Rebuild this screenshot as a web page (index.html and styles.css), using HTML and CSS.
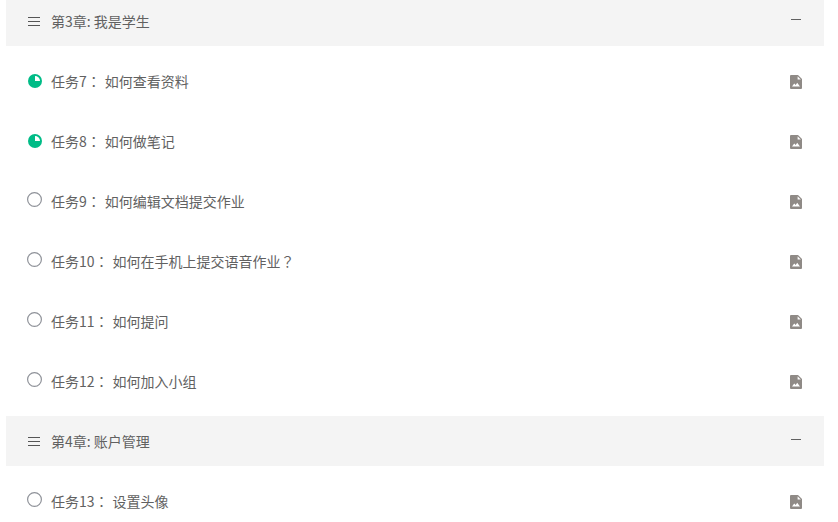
FILE: index.html
```html
<!DOCTYPE html>
<html lang="zh-CN">
<head>
<meta charset="utf-8">
<title>课程目录</title>
<link rel="stylesheet" href="styles.css">
</head>
<body>
<svg class="defs" width="0" height="0" aria-hidden="true">
  <symbol id="file" viewBox="0 0 12 14">
    <path fill="#8f8a86" d="M1 0h7l4 4v9a1 1 0 0 1-1 1H1a1 1 0 0 1-1-1V1a1 1 0 0 1 1-1z"/>
    <path fill="#fff" d="M7.6 1.2 10.8 4.4H7.6z"/>
    <path fill="#fff" d="M2 11.5 4.2 8.4l1.5 1.6 1.5-2.2 2.8 3.7z"/>
  </symbol>
  <symbol id="part" viewBox="0 0 14 14">
    <circle cx="7" cy="7" r="7" fill="#00bc87"/>
    <path fill="#fff" d="M7 2a5 5 0 0 1 5 5H7z"/>
  </symbol>
  <symbol id="empty" viewBox="0 0 15 15">
    <circle cx="7.5" cy="7.5" r="6.9" fill="none" stroke="#8f9299" stroke-width="1.2"/>
  </symbol>
</svg>
<main class="list">
  <section class="chapter">
    <span class="menu"><i></i><i></i><i></i></span>
    <span class="title">第3章: 我是学生</span>
    <span class="dash"></span>
  </section>
  <div class="tasks">
    <div class="task"><svg class="state part"><use href="#part"/></svg><span class="title">任务7<span class="punct" lang="zh-TW">：</span><span class="name">如何查看资料</span></span><svg class="file"><use href="#file"/></svg></div>
    <div class="task"><svg class="state part"><use href="#part"/></svg><span class="title">任务8<span class="punct" lang="zh-TW">：</span><span class="name">如何做笔记</span></span><svg class="file"><use href="#file"/></svg></div>
    <div class="task"><svg class="state empty"><use href="#empty"/></svg><span class="title">任务9<span class="punct" lang="zh-TW">：</span><span class="name">如何编辑文档提交作业</span></span><svg class="file"><use href="#file"/></svg></div>
    <div class="task"><svg class="state empty"><use href="#empty"/></svg><span class="title">任务10<span class="punct" lang="zh-TW">：</span><span class="name">如何在手机上提交语音作业<span class="punct" lang="zh-TW">？</span></span></span><svg class="file"><use href="#file"/></svg></div>
    <div class="task"><svg class="state empty"><use href="#empty"/></svg><span class="title">任务11<span class="punct" lang="zh-TW">：</span><span class="name">如何提问</span></span><svg class="file"><use href="#file"/></svg></div>
    <div class="task"><svg class="state empty"><use href="#empty"/></svg><span class="title">任务12<span class="punct" lang="zh-TW">：</span><span class="name">如何加入小组</span></span><svg class="file"><use href="#file"/></svg></div>
  </div>
  <section class="chapter">
    <span class="menu"><i></i><i></i><i></i></span>
    <span class="title">第4章: 账户管理</span>
    <span class="dash"></span>
  </section>
  <div class="tasks">
    <div class="task"><svg class="state empty"><use href="#empty"/></svg><span class="title">任务13<span class="punct" lang="zh-TW">：</span><span class="name">设置头像</span></span><svg class="file"><use href="#file"/></svg></div>
  </div>
</main>
</body>
</html>
```
FILE: styles.css
```css
html, body {
  margin: 0;
  height: 522px;
  overflow: hidden;
  background: #fff;
}
.defs { display: block; height: 0; }
.list {
  margin: -4px 14px 0 6px;
  font-family: "Noto Sans CJK SC", "Liberation Sans", sans-serif;
  font-size: 14px;
  color: #616161;
}
.chapter {
  display: flex;
  align-items: center;
  height: 50px;
  padding: 0 22px;
  background: #f4f4f4;
}
.menu {
  display: flex;
  flex-direction: column;
  gap: 3px;
  width: 12px;
  margin-right: 11px;
  margin-top: 1px;
}
.menu i { display: block; height: 1px; background: #555; }
.chapter .title { flex: 1; }
.dash { width: 10px; height: 1px; background: #616161; margin-top: -3px; margin-right: 1px; }
.tasks { padding: 5px 0; }
.task {
  display: flex;
  align-items: center;
  height: 60px;
  padding: 0 22px;
}
.task .title { flex: 1; margin-left: 8px; line-height: 20px; }
.punct { font-family: "Noto Sans CJK TC", sans-serif; }
.name { margin-left: 4px; }
.state { display: block; flex: none; }
.state.part { width: 14px; height: 14px; margin-right: 1px; }
.state.empty { width: 15px; height: 15px; margin: -3px 1px 0 -1px; }
.file { width: 12px; height: 14px; flex: none; margin-top: 2px; }
```
